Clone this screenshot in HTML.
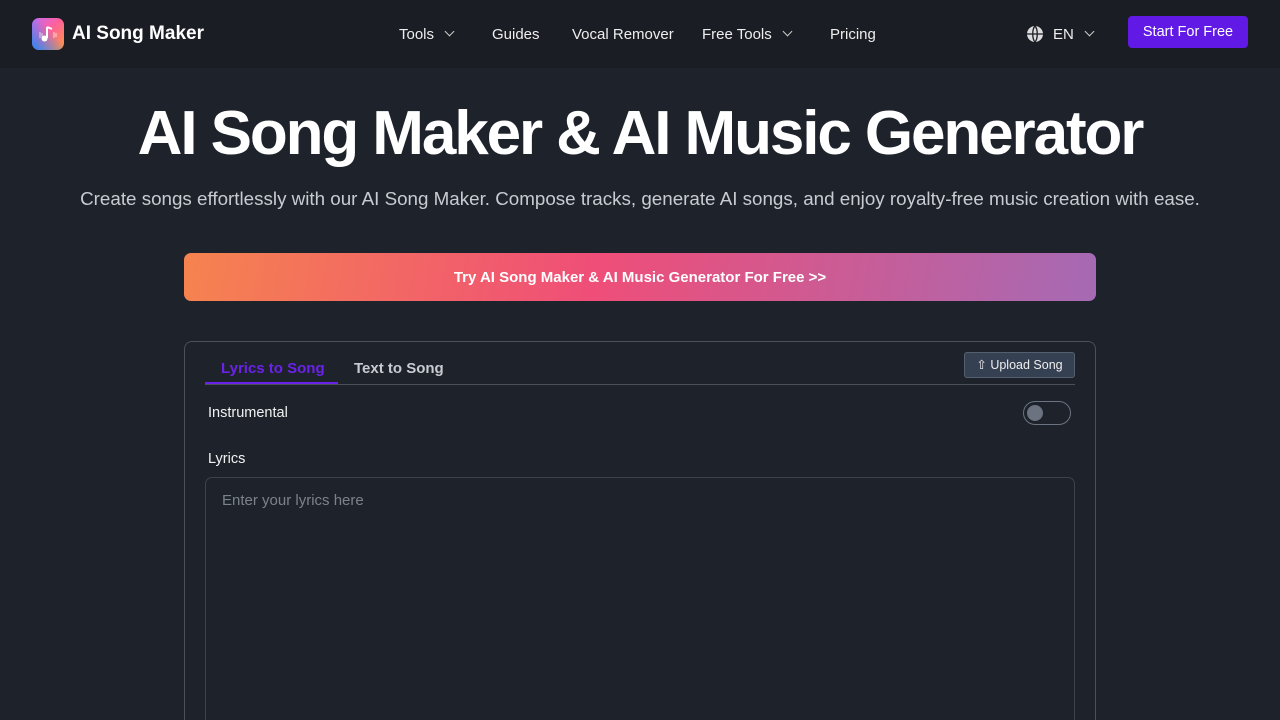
<!DOCTYPE html>
<html><head><meta charset="utf-8"><style>
*{box-sizing:border-box;margin:0;padding:0}
html,body{width:1280px;height:720px;overflow:hidden}
body{position:relative;background:#1e232b;font-family:"Liberation Sans",sans-serif;color:#fff}
.hdr{position:absolute;left:0;top:0;width:1280px;height:68px;background:#1a1d24}
.logo{position:absolute;left:32px;top:18px;width:32px;height:32px;border-radius:7px;background:linear-gradient(135deg,#c36cf5 0%,#ff5f9e 45%,#ff9a3c 100%);overflow:hidden}
.logo:before{content:"";position:absolute;inset:0;background:linear-gradient(225deg,transparent 40%,#1e8bff 100%)}
.brand{position:absolute;left:72px;top:23px;font-size:19px;font-weight:bold}
.nav{position:absolute;top:26px;font-size:15px;color:#eee}
.chev{display:inline-block;width:7px;height:7px;border-right:1.6px solid #ccc;border-bottom:1.6px solid #ccc;transform:rotate(45deg);margin-left:12px;position:relative;top:-4px}
.btn{position:absolute;left:1128px;top:16px;width:120px;height:32px;background:#6119e6;border-radius:4px;font-size:14.5px;text-align:center;line-height:33px}
h1{position:absolute;top:98px;left:0;width:1280px;text-align:center;font-size:62px;font-weight:bold;letter-spacing:-2.1px}
.sub{position:absolute;top:188px;left:0;width:1280px;text-align:center;font-size:18.8px;color:#c8ccd2}
.cta{position:absolute;left:184px;top:253px;width:912px;height:48px;border-radius:7px;background:linear-gradient(100deg,#f6834f 0%,#ef4e78 45%,#a56ab4 100%);text-align:center;line-height:49px;font-size:15px;font-weight:bold}
.card{position:absolute;left:184px;top:341px;width:912px;height:379px;border:1px solid #4a505a;border-bottom:none;border-radius:8px 8px 0 0}
.t1{position:absolute;left:221px;top:360px;font-size:15px;font-weight:bold;color:#6a22e8}
.t2{position:absolute;left:354px;top:360px;font-size:15px;font-weight:bold;color:#c8ccd2}
.line{position:absolute;left:205px;top:384px;width:870px;height:1px;background:#4a505a}
.uline{position:absolute;left:205px;top:382px;width:133px;height:2px;background:#6a22e8}
.up{position:absolute;left:964px;top:352px;width:111px;height:26px;border:1px solid #55606e;background:#354052;border-radius:3px;font-size:12.5px;line-height:24px;text-align:center;color:#eee}
.lbl{position:absolute;left:208px;font-size:14.5px;color:#f2f2f2}
.tog{position:absolute;left:1023px;top:401px;width:48px;height:24px;border:1px solid #6b7280;border-radius:12px}
.tog:after{content:"";position:absolute;left:3px;top:3px;width:16px;height:16px;border-radius:50%;background:#6b7280}
.ta{position:absolute;left:205px;top:477px;width:870px;height:243px;border:1px solid #3d434d;border-bottom:none;border-radius:7px 7px 0 0;padding:14px 16px;font-size:15px;color:#7c828b}
</style></head><body>
<div class="hdr"></div>
<div class="logo"><svg style="position:absolute;left:0;top:0" width="32" height="32" viewBox="0 0 32 32"><path d="M15 9v11" stroke="#fff" stroke-width="2"/><circle cx="12.5" cy="20.5" r="3" fill="#fff"/><path d="M15 9l5 2" stroke="#fff" stroke-width="2"/><path d="M8 14v6M10 15v4M22 14v6M24 15v4" stroke="#fff" stroke-width="1" opacity=".7"/></svg></div>
<div class="brand">AI Song Maker</div>
<div class="nav" style="left:399px">Tools<span class="chev"></span></div>
<div class="nav" style="left:492px">Guides</div>
<div class="nav" style="left:572px">Vocal Remover</div>
<div class="nav" style="left:702px">Free Tools<span class="chev"></span></div>
<div class="nav" style="left:830px">Pricing</div>
<svg style="position:absolute;left:1026px;top:25px" width="18" height="18" viewBox="0 0 18 18"><circle cx="9" cy="9" r="8" fill="#ddd"/><path d="M1 9h16M9 1c-3 3-3 13 0 16M9 1c3 3 3 13 0 16" stroke="#1a1d24" stroke-width="1.3" fill="none"/></svg>
<div class="nav" style="left:1053px">EN<span class="chev"></span></div>
<div class="btn">Start For Free</div>
<h1>AI Song Maker &amp; AI Music Generator</h1>
<div class="sub">Create songs effortlessly with our AI Song Maker. Compose tracks, generate AI songs, and enjoy royalty-free music creation with ease.</div>
<div class="cta">Try AI Song Maker &amp; AI Music Generator For Free &gt;&gt;</div>
<div class="card"></div>
<div class="t1">Lyrics to Song</div><div class="t2">Text to Song</div>
<div class="line"></div><div class="uline"></div>
<div class="up">⇧ Upload Song</div>
<div class="lbl" style="top:405px">Instrumental</div>
<div class="tog"></div>
<div class="lbl" style="top:451px">Lyrics</div>
<div class="ta">Enter your lyrics here</div>
</body></html>
